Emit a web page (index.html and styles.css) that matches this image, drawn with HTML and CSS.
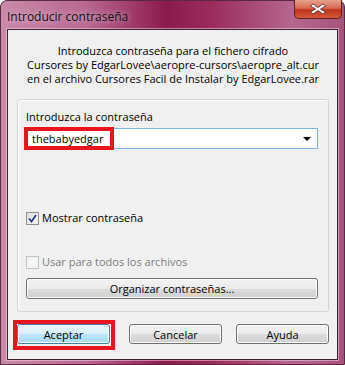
FILE: index.html
```html
<!DOCTYPE html>
<html lang="es">
<head>
    <meta charset="UTF-8">
    <title>Introducir contraseña</title>
    <link rel="stylesheet" href="styles.css">
</head>
<body>
<div class="window">
    <div class="titlebar">
        <span class="title">Introducir contraseña</span>
        <div class="close">
            <svg width="18" height="12" viewBox="0 0 18 12">
                <path d="M4 1 L9 4.5 L14 1 L16.5 3 L11.5 6 L16.5 9 L14 11 L9 7.5 L4 11 L1.5 9 L6.5 6 L1.5 3 Z" fill="#fff" stroke="#5a2020" stroke-width="0.8"/>
            </svg>
        </div>
    </div>
    <div class="client">
        <div class="info">
            Introduzca contraseña para el fichero cifrado<br>
            Cursores by EdgarLovee\aeropre-cursors\aeropre_alt.cur<br>
            en el archivo Cursores Facil de Instalar by EdgarLovee.rar
        </div>

        <div class="group">
            <div class="label">Introduzca la contraseña</div>
            <div class="combo">
                <span class="value">thebabyedgar</span>
                <span class="arrow"></span>
            </div>

            <label class="check show">
                <span class="box checked">
                    <svg width="9" height="9" viewBox="0 0 9 9"><path d="M1 4.5 L3.5 7.5 L8 1" fill="none" stroke="#2a3f8a" stroke-width="1.8"/></svg>
                </span>
                Mostrar contraseña
            </label>

            <label class="check disabled">
                <span class="box"></span>
                Usar para todos los archivos
            </label>

            <div class="btn wide">Organizar contraseñas...</div>
        </div>

        <div class="buttons">
            <div class="hl">
                <div class="btn default">Aceptar</div>
            </div>
            <div class="btn">Cancelar</div>
            <div class="btn">Ayuda</div>
        </div>
    </div>
</div>
</body>
</html>
```

FILE: styles.css
```css
body {
    margin: 0;
    font-family: "Open Sans", "Liberation Sans", sans-serif;
    font-size: 11px;
    color: #000;
}

.window {
    width: 345px;
    height: 365px;
    box-sizing: border-box;
    border-radius: 7px 7px 0 0;
    background: linear-gradient(90deg, #c98aa8 0%, #b86791 25%, #8c1a4d 48%, #9b2d5d 62%, #b5678f 85%, #a6527d 100%);
    border: 1px solid #5a2a40;
    padding: 0 6px 4px;
}

.titlebar {
    height: 28px;
    display: flex;
    align-items: flex-start;
    justify-content: space-between;
}

.title {
    margin-top: 7px;
    font-size: 12px;
    color: #111;
    text-shadow: 0 0 6px rgba(255, 255, 255, 0.7);
}

.close {
    width: 48px;
    height: 19px;
    margin-right: -4px;
    margin-top: -1px;
    box-sizing: border-box;
    border: 1px solid #5c2020;
    border-top: none;
    border-radius: 0 0 5px 5px;
    background: linear-gradient(#e6a08c 0%, #d86a52 45%, #c0331b 55%, #d55b3a 100%);
    display: flex;
    align-items: center;
    justify-content: center;
}

.client {
    height: 331px;
    box-sizing: border-box;
    background: #f0f0f0;
    border: 1px solid #3d2230;
    box-shadow: 0 0 0 1px rgba(255, 220, 235, 0.5);
    padding: 0 8px 0 9px;
}

.info {
    text-align: center;
    line-height: 14px;
    margin-top: 14px;
}

.group {
    margin-top: 13px;
    height: 213px;
    box-sizing: border-box;
    border: 1px solid #d5d5d5;
    border-radius: 3px;
    box-shadow: inset 1px 1px 0 #fff;
    padding: 10px 10px 0 8px;
}

.label {
    line-height: 14px;
}

.combo {
    margin-top: 4px;
    height: 21px;
    box-sizing: border-box;
    border: 1px solid #7eb4ea;
    background: #fff;
    display: flex;
    align-items: center;
    justify-content: space-between;
}

.value {
    margin-left: 1px;
    padding: 0 3px 0 4px;
    line-height: 15px;
    outline: 4px solid #e8141e;
    width: 75px;
}

.arrow {
    width: 0;
    height: 0;
    border-left: 4px solid transparent;
    border-right: 4px solid transparent;
    border-top: 4px solid #000;
    margin-right: 6px;
}

.check {
    display: flex;
    align-items: center;
    gap: 3px;
    line-height: 14px;
}

.check.show {
    margin-top: 62px;
}

.check.disabled {
    margin-top: 30px;
    color: #7d7d7d;
}

.box {
    width: 13px;
    height: 13px;
    box-sizing: border-box;
    border: 1px solid #8f8f8f;
    background: linear-gradient(135deg, #dcdcdc, #fbfbfb);
    display: flex;
    align-items: center;
    justify-content: center;
}

.disabled .box {
    border-color: #c4c4c4;
    background: #f4f4f4;
}

.btn {
    height: 21px;
    box-sizing: border-box;
    border: 1px solid #707070;
    border-radius: 3px;
    background: linear-gradient(#f2f2f2 0%, #ebebeb 50%, #dddddd 51%, #cfcfcf 100%);
    box-shadow: inset 0 0 0 1px #fcfcfc;
    display: flex;
    align-items: center;
    justify-content: center;
}

.btn.wide {
    margin-top: 9px;
}

.buttons {
    margin-top: 8px;
    display: flex;
    justify-content: space-between;
    align-items: flex-start;
}

.buttons .btn {
    width: 93px;
    height: 20px;
}

.buttons > .btn {
    margin-top: 4px;
}

.hl {
    border: 4px solid #e8141e;
    padding: 0 1px 2px 0;
    margin-left: -4px;
}

.btn.default {
    border-color: #3c7fb1;
    background: linear-gradient(#eaf6fd 0%, #d9f0fc 50%, #bee6fd 51%, #a7d9f5 100%);
}
```
